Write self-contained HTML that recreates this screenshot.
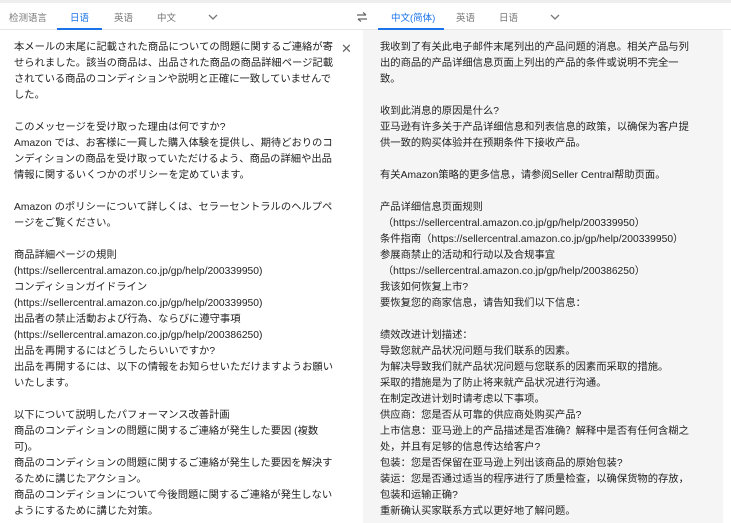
<!DOCTYPE html>
<html><head><meta charset="utf-8"><style>
*{margin:0;padding:0;box-sizing:border-box}
body{width:731px;height:523px;overflow:hidden;background:#fff;font-family:"Liberation Sans","Noto Sans CJK SC",sans-serif;position:relative}
.topline{position:absolute;left:0;top:0;width:731px;height:3px;background:#eee}
.bar{position:absolute;left:0;top:3px;width:731px;height:27px;border-bottom:1px solid #e6e6e6}
.t{position:absolute;top:7px;font-size:9.5px;color:#777;font-family:"Liberation Sans","Noto Sans CJK SC",sans-serif}
.a{color:#1a73e8}
.ul{position:absolute;top:25px;height:2px;background:#1a73e8}
.right{position:absolute;left:363px;top:30px;width:360px;height:493px;background:#f5f5f5}
.txt{position:absolute;top:40px;font-size:10.3px;line-height:16px;color:#222;white-space:nowrap}
.l{left:14px;font-family:"Liberation Sans","Noto Sans CJK JP",sans-serif}
.r{left:380px;font-family:"Liberation Sans","Noto Sans CJK SC",sans-serif}
.x{position:absolute;left:341px;top:41px;font-size:13px;color:#666}
</style></head><body>
<div class="topline"></div>
<div class="bar">
<span class="t" style="left:9px">检测语言</span>
<span class="t a" style="left:70px">日语</span>
<span class="t" style="left:114px">英语</span>
<span class="t" style="left:157px">中文</span>
<svg style="position:absolute;left:208px;top:11px" width="10" height="7"><path d="M1 1l4 4 4-4" fill="none" stroke="#777" stroke-width="1.3"/></svg>
<svg style="position:absolute;left:356px;top:9px" width="12" height="10"><path d="M1 3h9M7 0.5l3 2.5M11 7H2M5 9.5L2 7" fill="none" stroke="#666" stroke-width="1.2"/></svg>
<span class="t a" style="left:391px">中文(简体)</span>
<span class="t" style="left:456px">英语</span>
<span class="t" style="left:499px">日语</span>
<svg style="position:absolute;left:550px;top:11px" width="10" height="7"><path d="M1 1l4 4 4-4" fill="none" stroke="#777" stroke-width="1.3"/></svg>
<div class="ul" style="left:57px;width:45px"></div>
<div class="ul" style="left:378px;width:66px"></div>
</div>
<div class="right"></div>
<div class="x">✕</div>
<div class="txt l">本メールの末尾に記載された商品についての問題に関するご連絡が寄<br>せられました。該当の商品は、出品された商品の商品詳細ページ記載<br>されている商品のコンディションや説明と正確に一致していませんで<br>した。<br><br>このメッセージを受け取った理由は何ですか?<br>Amazon では、お客様に一貫した購入体験を提供し、期待どおりのコ<br>ンディションの商品を受け取っていただけるよう、商品の詳細や出品<br>情報に関するいくつかのポリシーを定めています。<br><br>Amazon のポリシーについて詳しくは、セラーセントラルのヘルプペ<br>ージをご覧ください。<br><br>商品詳細ページの規則<br>(https://sellercentral.amazon.co.jp/gp/help/200339950)<br>コンディションガイドライン<br>(https://sellercentral.amazon.co.jp/gp/help/200339950)<br>出品者の禁止活動および行為、ならびに遵守事項<br>(https://sellercentral.amazon.co.jp/gp/help/200386250)<br>出品を再開するにはどうしたらいいですか?<br>出品を再開するには、以下の情報をお知らせいただけますようお願い<br>いたします。<br><br>以下について説明したパフォーマンス改善計画<br>商品のコンディションの問題に関するご連絡が発生した要因 (複数<br>可)。<br>商品のコンディションの問題に関するご連絡が発生した要因を解決す<br>るために講じたアクション。<br>商品のコンディションについて今後問題に関するご連絡が発生しない<br>ようにするために講じた対策。</div>
<div class="txt r">我收到了有关此电子邮件末尾列出的产品问题的消息。相关产品与列<br>出的商品的产品详细信息页面上列出的产品的条件或说明不完全一<br>致。<br><br>收到此消息的原因是什么?<br>亚马逊有许多关于产品详细信息和列表信息的政策，以确保为客户提<br>供一致的购买体验并在预期条件下接收产品。<br><br>有关Amazon策略的更多信息，请参阅Seller Central帮助页面。<br><br>产品详细信息页面规则<br>&nbsp;（https://sellercentral.amazon.co.jp/gp/help/200339950）<br>条件指南（https://sellercentral.amazon.co.jp/gp/help/200339950）<br>参展商禁止的活动和行动以及合规事宜<br>&nbsp;（https://sellercentral.amazon.co.jp/gp/help/200386250）<br>我该如何恢复上市?<br>要恢复您的商家信息，请告知我们以下信息：<br><br>绩效改进计划描述：<br>导致您就产品状况问题与我们联系的因素。<br>为解决导致我们就产品状况问题与您联系的因素而采取的措施。<br>采取的措施是为了防止将来就产品状况进行沟通。<br>在制定改进计划时请考虑以下事项。<br>供应商：您是否从可靠的供应商处购买产品?<br>上市信息：亚马逊上的产品描述是否准确？解释中是否有任何含糊之<br>处，并且有足够的信息传达给客户?<br>包装：您是否保留在亚马逊上列出该商品的原始包装?<br>装运：您是否通过适当的程序进行了质量检查，以确保货物的存放，<br>包装和运输正确?<br>重新确认买家联系方式以更好地了解问题。</div>
</body></html>
